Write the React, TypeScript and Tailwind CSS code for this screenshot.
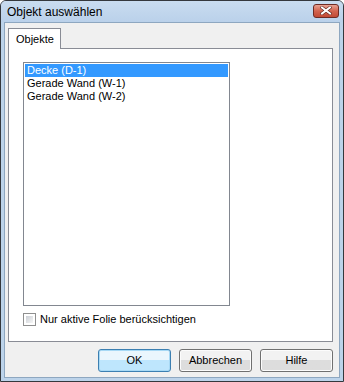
import React from "react";

const items = ["Decke (D-1)", "Gerade Wand (W-1)", "Gerade Wand (W-2)"];

function CloseButton() {
  return (
    <div className="flex h-[14px] w-[26px] items-center justify-center rounded-[3px] border border-[#6e2b24] bg-gradient-to-b from-[#e8a293] via-[#d2634f] to-[#c24a35]">
      <svg width="12" height="9" viewBox="0 0 12 9">
        <path d="M2 1.5 L10 7.5 M10 1.5 L2 7.5" stroke="#5b2019" strokeWidth="3.2" strokeLinecap="square" />
        <path d="M2 1.5 L10 7.5 M10 1.5 L2 7.5" stroke="#ffffff" strokeWidth="2" strokeLinecap="square" />
      </svg>
    </div>
  );
}

function Button({ label, primary }: { label: string; primary?: boolean }) {
  return (
    <button
      type="button"
      className={
        primary
          ? "h-[23px] w-[73px] rounded-[3px] border border-[#3c7fb1] bg-gradient-to-b from-[#eaf6fd] from-50% to-[#bee6fd] to-50% text-[11px] text-black shadow-[inset_0_0_0_1px_#a7d9f5]"
          : "h-[23px] w-[73px] rounded-[3px] border border-[#707070] bg-gradient-to-b from-[#f2f2f2] from-50% to-[#dddddd] to-50% text-[11px] text-black shadow-[inset_0_0_0_1px_#fcfcfc]"
      }
    >
      {label}
    </button>
  );
}

export default function App() {
  return (
    <div className="h-[382px] w-[344px] font-['Liberation_Sans',Tahoma,sans-serif] text-black">
      <div className="flex h-full w-full flex-col rounded-t-[6px] border border-[#34383d] bg-[#bcd3ea]">
        <div className="flex h-[21px] shrink-0 items-center justify-between rounded-t-[5px] bg-gradient-to-b from-[#c9dcf0] to-[#bad1ea] pl-[6px] pr-[4px]">
          <span className="text-[12px] leading-none">Objekt auswählen</span>
          <div className="-mt-[2px]">
            <CloseButton />
          </div>
        </div>
        <div className="mx-[3px] mb-[3px] flex flex-1 flex-col border border-[#8ea7c0] bg-[#f0f0f0] pl-[3px] pt-[5px]">
          <div className="flex">
            <div className="relative z-10 -mb-px flex h-[21px] w-[53px] items-center border border-b-0 border-[#898c95] bg-white pl-[7px] text-[11px]">
              Objekte
            </div>
          </div>
          <div className="flex h-[294px] w-[325px] flex-col border border-[#898c95] bg-white pl-[14px] pt-[13px]">
            <div className="h-[244px] w-[207px] border border-[#828790] bg-white p-px text-[11px]">
              {items.map((it, i) => (
                <div
                  key={it}
                  className={
                    i === 0
                      ? "h-[13px] bg-[#3399ff] pl-[2px] leading-[13px] text-white"
                      : "h-[13px] pl-[2px] leading-[13px]"
                  }
                >
                  {it}
                </div>
              ))}
            </div>
            <div className="mt-[7px] flex h-[13px] items-center gap-[4px] text-[11px] leading-[13px]">
              <div className="h-[13px] w-[13px] border border-[#8f8f8f] bg-white p-[2px]">
                <div className="h-full w-full bg-gradient-to-br from-[#cbcfd5] to-[#f6f6f6]" />
              </div>
              <span>Nur aktive Folie berücksichtigen</span>
            </div>
          </div>
          <div className="mt-[7px] flex gap-[8px] pl-[90px]">
            <Button label="OK" primary />
            <Button label="Abbrechen" />
            <Button label="Hilfe" />
          </div>
        </div>
      </div>
    </div>
  );
}
